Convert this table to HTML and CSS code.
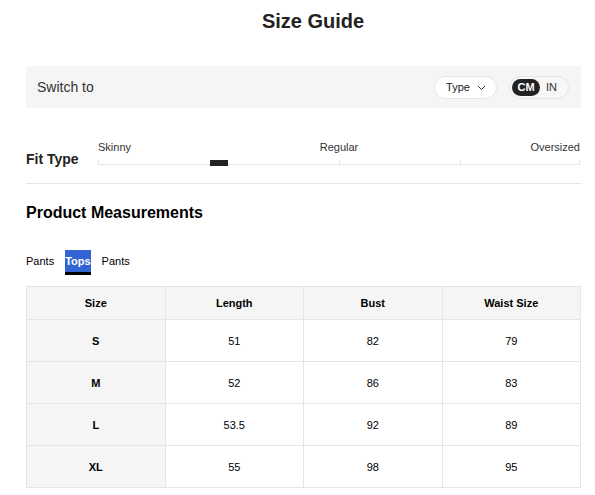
FILE: index.html
```html
<!DOCTYPE html>
<html>
<head>
<meta charset="utf-8">
<link rel="stylesheet" href="styles.css">
</head>
<body>
<div class="page">
  <h1 class="title">Size Guide</h1>

  <div class="switch-bar">
    <span class="switch-label">Switch to</span>
    <div class="switch-controls">
      <button class="type-pill">Type
        <svg class="chev" width="9" height="6" viewBox="0 0 9 6"><path d="M1 1 L4.5 4.5 L8 1" fill="none" stroke="#333" stroke-width="1"/></svg>
      </button>
      <div class="unit-toggle">
        <span class="unit active">CM</span>
        <span class="unit">IN</span>
      </div>
    </div>
  </div>

  <div class="fit">
    <div class="fit-label">Fit Type</div>
    <div class="fit-slider">
      <div class="fit-names">
        <span class="n-left">Skinny</span>
        <span class="n-mid">Regular</span>
        <span class="n-right">Oversized</span>
      </div>
      <div class="track">
        <span class="tick t0"></span>
        <span class="tick t50"></span>
        <span class="tick t75"></span>
        <span class="tick t100"></span>
        <span class="knob"></span>
      </div>
    </div>
  </div>

  <h2 class="section-title">Product Measurements</h2>

  <div class="tabs">
    <span class="tab">Pants</span>
    <span class="tab active">Tops</span>
    <span class="tab">Pants</span>
  </div>

  <table class="sizes">
    <thead>
      <tr><th>Size</th><th>Length</th><th>Bust</th><th>Waist Size</th></tr>
    </thead>
    <tbody>
      <tr><th>S</th><td>51</td><td>82</td><td>79</td></tr>
      <tr><th>M</th><td>52</td><td>86</td><td>83</td></tr>
      <tr><th>L</th><td>53.5</td><td>92</td><td>89</td></tr>
      <tr><th>XL</th><td>55</td><td>98</td><td>95</td></tr>
    </tbody>
  </table>
</div>
</body>
</html>
```

FILE: styles.css
```css
* { box-sizing: border-box; }
body {
  margin: 0;
  font-family: "Liberation Sans", Arial, sans-serif;
  color: #222;
  background: #fff;
}
.page {
  padding: 9px 14px 0 26px;
}
.title {
  margin: 0 0 33px 0;
  padding-left: 19px;
  font-size: 20px;
  line-height: 24px;
  font-weight: bold;
  text-align: center;
  color: #222;
}
.switch-bar {
  height: 42px;
  background: #f5f5f5;
  display: flex;
  align-items: center;
  justify-content: space-between;
  padding: 0 12px 0 11px;
}
.switch-label {
  font-size: 14px;
  color: #333;
}
.switch-controls {
  display: flex;
  align-items: center;
  gap: 12px;
}
.type-pill {
  height: 23px;
  width: 63px;
  border: 1px solid #e5e5e5;
  border-radius: 12px;
  background: #fff;
  font-family: inherit;
  font-size: 11px;
  color: #222;
  display: flex;
  align-items: center;
  justify-content: center;
  gap: 7px;
  padding: 0 0 0 1px;
}
.chev { display: block; margin-top: 1px; }
.unit-toggle {
  height: 23px;
  width: 60px;
  border: 1px solid #e5e5e5;
  border-radius: 12px;
  background: #f7f7f7;
  display: flex;
  align-items: center;
  padding: 0 2px;
  gap: 6px;
}
.unit {
  font-size: 11px;
  color: #333;
  line-height: 17px;
}
.unit.active {
  background: #222;
  color: #fff;
  font-weight: bold;
  border-radius: 9px;
  padding: 0 5px;
  width: 28px;
  text-align: center;
}
.fit {
  display: flex;
  align-items: flex-end;
  padding-top: 33px;
  padding-bottom: 16px;
  border-bottom: 1px solid #e5e5e5;
}
.fit-label {
  width: 72px;
  flex: none;
  font-size: 14px;
  line-height: 16px;
  font-weight: bold;
  color: #222;
}
.fit-slider {
  width: 482px;
}
.fit-names {
  display: grid;
  grid-template-columns: 1fr auto 1fr;
  font-size: 11px;
  line-height: 13px;
  color: #333;
}
.n-right { text-align: right; }
.track {
  position: relative;
  height: 13px;
}
.track::before {
  content: "";
  position: absolute;
  left: 0;
  right: 0;
  top: 10px;
  height: 1px;
  background: #e5e5e5;
}
.tick {
  position: absolute;
  top: 6px;
  width: 1px;
  height: 4px;
  background: #e5e5e5;
}
.t0 { left: 0; }
.t50 { left: 50%; }
.t75 { left: 75%; }
.t100 { right: 0; }
.knob {
  position: absolute;
  left: 112px;
  top: 6px;
  width: 18px;
  height: 6px;
  background: #222;
}
.section-title {
  margin: 19px 0 0 0;
  font-size: 16px;
  line-height: 19px;
  font-weight: bold;
  color: #000;
}
.tabs {
  margin-top: 28px;
  display: flex;
  gap: 11px;
}
.tab {
  font-size: 11px;
  line-height: 22px;
  color: #000;
  border-bottom: 3px solid transparent;
}
.tab.active {
  background: #3265d3;
  color: #fff;
  font-weight: bold;
  border-bottom-color: #000;
}
.sizes {
  margin-top: 11px;
  width: 555px;
  border-collapse: collapse;
  table-layout: fixed;
  font-size: 11px;
  color: #000;
}
.sizes th, .sizes td {
  border: 1px solid #e5e5e5;
  text-align: center;
  padding: 0;
}
.sizes th { font-weight: bold; background: #f5f5f5; }
.sizes td { background: #fff; }
.sizes thead th { height: 33px; }
.sizes tbody th, .sizes tbody td { height: 42px; }
```
